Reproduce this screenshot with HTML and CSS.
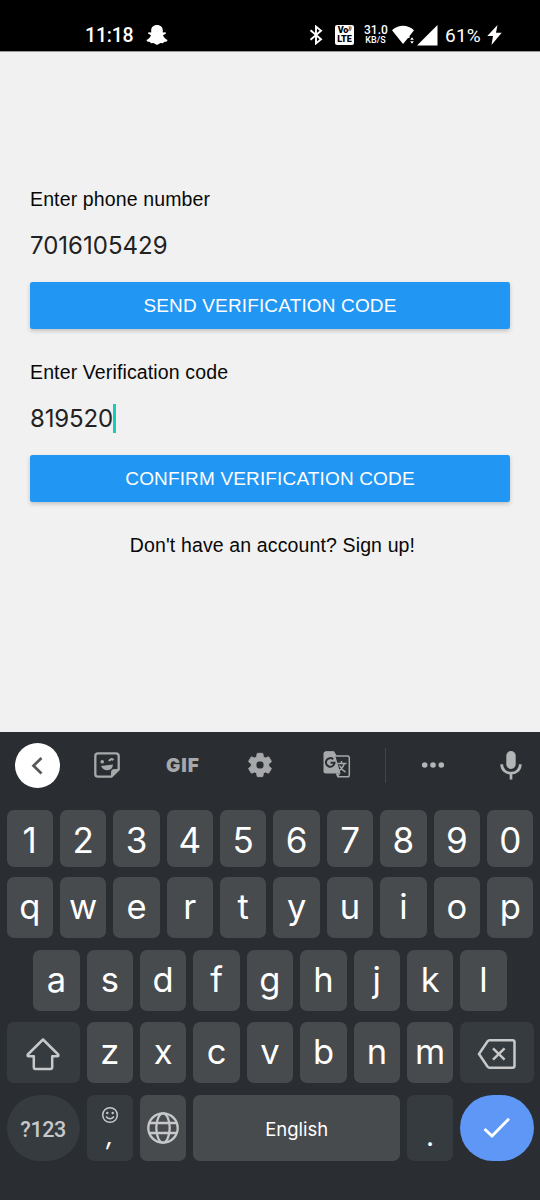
FILE: index.html
```html
<!DOCTYPE html>
<html lang="en">
<head>
<meta charset="utf-8">
<title>Phone verification</title>
<link rel="stylesheet" href="styles.css">
</head>
<body>
<header class="status">
  <span class="clock">11:18</span>
  <svg class="snap" width="22" height="20" viewBox="0 0 22 20"><path d="M11 0C7.400 0 5.200 2.300 5.200 5.500V7.500L2.500 7.300 2 8.500 5 10.300C4.300 12.500 2.600 14 .4 15.100L1.300 16.500 4 17.100 5 18.200 7.500 18 11 20 14.500 18 17 18.200 18 17.100 20.700 16.500 21.600 15.100C19.400 14 17.700 12.500 17 10.300L20 8.500 19.500 7.300 16.800 7.500V5.500C16.800 2.300 14.600 0 11 0Z" fill="#fff"/></svg>
  <span class="spacer"></span>
  <svg class="bt" width="14" height="20" viewBox="0 0 14 20"><path d="M1.500 5.300 12 14.200 7 18.400V1.600L12 5.800 1.500 14.700" fill="none" stroke="#fff" stroke-width="1.900"/></svg>
  <span class="volte"><span class="vo">Vo<i>))</i></span><span class="lte">LTE</span></span>
  <span class="speed"><b>31.0</b><small>KB/S</small></span>
  <svg class="wifi" width="23" height="20" viewBox="0 0 23 20"><path d="M0 5.200C6-.9 16-.9 22 5.200L17.500 11V13H16L11 19Z" fill="#fff"/><path d="M18.200 14.800 20 12.300 21.800 14.800ZM18.200 16.200 20 18.700 21.800 16.200Z" fill="#fff"/></svg>
  <svg class="signal" width="21" height="21" viewBox="0 0 21 21"><path d="M0 20.500 20.500 0V20.500Z" fill="#fff"/></svg>
  <span class="battery">61%</span>
  <svg class="bolt" width="15" height="20" viewBox="0 0 15 20"><path d="M10.500 0 .3 11H6L4.500 20 14.700 7.800H9Z" fill="#fff"/></svg>
</header>

<main class="form">
  <label class="label phone-label">Enter phone number</label>
  <div class="field phone">7016105429</div>
  <button class="btn send">SEND VERIFICATION CODE</button>
  <label class="label code-label">Enter Verification code</label>
  <div class="field code">819520<span class="caret"></span></div>
  <button class="btn confirm">CONFIRM VERIFICATION CODE</button>
  <a class="signup">Don't have an account? Sign up!</a>
</main>

<section class="keyboard">
  <div class="tools">
    <span class="back"><svg width="45" height="45" viewBox="0 0 45 45"><path d="M26.500 15 18.500 22.700 26.500 30.500" fill="none" stroke="#555759" stroke-width="2.700"/></svg></span>
    <svg class="t-sticker" width="26" height="26" viewBox="0 0 26 26"><path d="M4 1.300H22Q24.700 1.300 24.700 4V17.500L17.500 24.700H4Q1.300 24.700 1.300 22V4Q1.300 1.300 4 1.300Z" fill="none" stroke="#a6a8aa" stroke-width="2.300"/><path d="M17 25V20.500Q17 17 20.500 17H25Z" fill="#a6a8aa"/><path d="M7 14 19 12.500Q18.500 18 13.500 18.200 9 18.300 7 14Z" fill="#a6a8aa"/><circle cx="8.200" cy="9.800" r="1.800" fill="#a6a8aa"/><path d="M15 9Q17 6 19.500 8" stroke="#a6a8aa" stroke-width="2.200" fill="none"/></svg>
    <span class="gif">GIF</span>
    <svg class="t-gear" width="28" height="28" viewBox="0 0 24 24"><path fill="#a6a8aa" stroke="#a6a8aa" stroke-width=".8" stroke-linejoin="round" fill-rule="evenodd" d="M19.430 12.980c.04-.32.07-.64.07-.98s-.03-.66-.07-.98l2.110-1.650c.19-.15.24-.42.12-.64l-2-3.460c-.12-.22-.39-.3-.61-.22l-2.490 1c-.52-.4-1.080-.73-1.690-.98l-.38-2.650C14.460 2.180 14.250 2 14 2h-4c-.25 0-.46.18-.49.42l-.38 2.650c-.61.25-1.170.59-1.690.98l-2.490-1c-.23-.09-.49 0-.61.22l-2 3.460c-.13.22-.07.49.12.64l2.110 1.650c-.04.32-.07.65-.07.98s.03.66.07.98l-2.110 1.650c-.19.15-.24.42-.12.64l2 3.460c.12.22.39.3.61.22l2.490-1c.52.4 1.080.73 1.690.98l.38 2.650c.03.24.24.42.49.42h4c.25 0 .46-.18.49-.42l.38-2.650c.61-.25 1.170-.59 1.690-.98l2.490 1c.23.09.49 0 .61-.22l2-3.460c.12-.22.07-.49-.12-.64l-2.110-1.650ZM12 15.500A3.500 3.500 0 1 1 12 8.500a3.500 3.500 0 0 1 0 7Z"/></svg>
    <svg class="t-trans" width="28" height="28" viewBox="0 0 28 28"><path d="M2.500 1H10.500L13 5H24.500Q26.300 5 26.300 6.800V24Q26.300 25.800 24.500 25.800H15L13.500 22.500" fill="none" stroke="#a6a8aa" stroke-width="1.500"/><path d="M2.500.5H11L17.500 22.500H2.500Q.5 22.500.5 20.500V2.500Q.5.5 2.500.5Z" fill="#a6a8aa"/><path d="M13.500 22.500H17.500L14.500 26Z" fill="#a6a8aa"/><path d="M10.200 8.300A4.300 4.300 0 1 0 11.500 11.800H7.600" fill="none" stroke="#2a2e32" stroke-width="2"/><path d="M14.500 12.500H23.500M18.500 10V12.500M21.500 12.500Q20 17 15.500 20.500M16.500 14.500Q18.500 19 22.500 21" fill="none" stroke="#a6a8aa" stroke-width="1.500"/></svg>
    <span class="divider"></span>
    <svg class="t-dots" width="24" height="8" viewBox="0 0 24 8"><circle cx="3.700" cy="4" r="2.800" fill="#b3b5b6"/><circle cx="12" cy="4" r="2.800" fill="#b3b5b6"/><circle cx="20.300" cy="4" r="2.800" fill="#b3b5b6"/></svg>
    <svg class="t-mic" width="22" height="30" viewBox="0 0 22 30"><rect x="6.300" y="1" width="9.400" height="18" rx="4.700" fill="#b3b5b6"/><path d="M1.700 14.200C1.700 26.200 20.300 26.200 20.300 14.200M11 23V29.500" fill="none" stroke="#b3b5b6" stroke-width="2.700"/></svg>
  </div>

  <div class="row digits"><span class="key">1</span><span class="key">2</span><span class="key">3</span><span class="key">4</span><span class="key">5</span><span class="key">6</span><span class="key">7</span><span class="key">8</span><span class="key">9</span><span class="key">0</span></div>
  <div class="row letters"><span class="key">q</span><span class="key">w</span><span class="key">e</span><span class="key">r</span><span class="key">t</span><span class="key">y</span><span class="key">u</span><span class="key">i</span><span class="key">o</span><span class="key">p</span></div>
  <div class="row letters home"><span class="key">a</span><span class="key">s</span><span class="key">d</span><span class="key">f</span><span class="key">g</span><span class="key">h</span><span class="key">j</span><span class="key">k</span><span class="key">l</span></div>
  <div class="row letters lower">
    <span class="key wide dim"><svg width="36" height="34" viewBox="0 0 36 34"><path d="M18 2.500 33.200 17.500Q34 19.200 32.200 19.200H27.200V30.200Q27.200 32 25.400 32H10.600Q8.800 32 8.800 30.200V19.200H3.800Q2 19.200 2.800 17.500Z" fill="none" stroke="#c6c8c9" stroke-width="2.500" stroke-linejoin="round"/></svg></span>
    <span class="key">z</span><span class="key">x</span><span class="key">c</span><span class="key">v</span><span class="key">b</span><span class="key">n</span><span class="key">m</span>
    <span class="key wide dim"><svg width="40" height="32" viewBox="0 0 40 32"><path d="M12.500 2.200H35.500Q37.500 2.200 37.500 4.200V27.800Q37.500 29.800 35.500 29.800H12.500Q11.300 29.800 10.600 28.700L2 16 10.600 3.300Q11.300 2.200 12.500 2.200Z" fill="none" stroke="#c6c8c9" stroke-width="2.500"/><path d="M16 10.300 27.600 21.700M27.600 10.300 16 21.700" stroke="#c6c8c9" stroke-width="2.500"/></svg></span>
  </div>
  <div class="row bottom">
    <span class="key wide dim round symbols">?123</span>
    <span class="key dim comma"><svg width="18" height="18" viewBox="0 0 18 18"><circle cx="9" cy="9" r="7.300" fill="none" stroke="#c6c8c9" stroke-width="1.500"/><circle cx="6.300" cy="7" r="1.200" fill="#c6c8c9"/><circle cx="11.700" cy="7" r="1.200" fill="#c6c8c9"/><path d="M5 10.500Q9 15 13 10.500" fill="none" stroke="#c6c8c9" stroke-width="1.500"/></svg><span class="comma-mark">,</span></span>
    <span class="key globe"><svg width="34" height="34" viewBox="0 0 34 34" fill="none" stroke="#c6c8c9" stroke-width="2.300"><circle cx="17" cy="17" r="14.700"/><ellipse cx="17" cy="17" rx="6.700" ry="14.700"/><path d="M3.500 12H30.500M3.500 22H30.500"/></svg></span>
    <span class="key space">English</span>
    <span class="key dim period">.</span>
    <span class="key wide round enter"><svg width="28" height="22" viewBox="0 0 28 22"><path d="M1.500 12 9 19 26 1.800" fill="none" stroke="#fff" stroke-width="2.900"/></svg></span>
  </div>
</section>
</body>
</html>
```
FILE: styles.css
```css
* { box-sizing: border-box; }
body {
  margin: 0;
  width: 540px;
  height: 1200px;
  overflow: hidden;
  display: flex;
  flex-direction: column;
  background: #f1f1f1;
  font-family: Inter, "Liberation Sans", sans-serif;
}
svg { display: block; flex: none; }

.status {
  height: 51px;
  flex: none;
  display: flex;
  align-items: center;
  padding: 19px 38px 0 85px;
  background: #000;
  color: #fff;
  font-family: Roboto, sans-serif;
  box-shadow: 0 1px 0 #999;
}
.clock { width: 61px; font-size: 19.5px; font-weight: 500; letter-spacing: -.2px; }
.spacer { flex: 1; }
.bt { margin-right: 12px; }
.volte {
  width: 19px;
  height: 20px;
  margin-right: 10px;
  padding-top: 1px;
  border-radius: 2px;
  background: #fff;
  color: #000;
  font-size: 9px;
  font-weight: 900;
  line-height: 9px;
  text-align: center;
}
.vo, .lte { display: block; white-space: nowrap; }
.vo { letter-spacing: -.2px; }
.vo i { font-size: 5px; line-height: 5px; vertical-align: 3px; }
.speed { width: 23px; margin-right: 5px; text-align: center; }
.speed b { display: block; font-size: 12px; line-height: 11px; font-weight: 500; }
.speed small { display: block; font-size: 9px; line-height: 9px; font-weight: 500; }
.signal { margin-left: 2px; }
.battery { width: 42px; margin-left: 7px; font-size: 19px; letter-spacing: .2px; }

.form { height: 681px; flex: none; display: flex; flex-direction: column; padding: 135px 30px 0; }
.label, .signup { font-family: "Liberation Sans", Arial, sans-serif; font-size: 19.5px; line-height: 26px; letter-spacing: .13px; color: #080808; }
.label { height: 24px; }
.field { display: flex; align-items: center; height: 32px; color: #222; font-size: 24px; }
.phone { margin: 19px 0 21px; }
.code { margin: 19px 0 21px; letter-spacing: -.15px; }
.caret { width: 3px; height: 29px; background: #14ceb9; }
.btn {
  height: 47px;
  padding: 0;
  border: 0;
  border-radius: 2.5px;
  background: #2196f3;
  box-shadow: 0 2px 4px rgba(0, 0, 0, .2);
  color: #fff;
  font: 400 19px "Liberation Sans", Arial, sans-serif;
  letter-spacing: .15px;
}
.code-label { margin-top: 30px; }
.signup { margin: 30px 0 0 5px; text-align: center; }

.keyboard {
  height: 468px;
  flex: none;
  display: flex;
  flex-direction: column;
  padding: 0 6.500px;
  background: #2a2e32;
  color: #fff;
}
.tools { height: 66px; flex: none; display: flex; align-items: center; padding-left: 8.500px; }
.back { width: 45px; height: 45px; border-radius: 50%; background: #fff; }
.t-sticker { margin-left: 34px; }
.gif { width: 36px; margin: 0 44px 0 46px; font-size: 19px; font-weight: 900; color: #a6a8aa; letter-spacing: 1px; }
.t-trans { margin-left: 49px; }
.divider { width: 1px; height: 35px; margin: 0 35.500px 0 33.500px; background: #414549; }
.t-mic { margin-left: 54.500px; }

.row { display: flex; flex: none; gap: 7px; height: 61px; margin-bottom: 11.600px; }
.digits { height: 57px; margin: 12px 0 10.300px; }
.home { padding: 0 26.700px; }
.key {
  width: 46.400px;
  flex: none;
  display: flex;
  align-items: center;
  justify-content: center;
  border-radius: 7px;
  background: #484b4e;
  font-size: 35px;
}
.digits .key { padding-top: 3px; }
.letters .key { padding-bottom: 2px; font-size: 34.500px; }
.letters .wide { padding: 2px 0 0; }
.wide { width: 73.200px; }
.dim { background: #363b3f; }
.bottom { height: 66px; }
.round { border-radius: 33px; }
.key.symbols { font: 500 21.500px Roboto, sans-serif; letter-spacing: -.4px; color: #c6c8c9; padding-top: 3px; }
.comma { flex-direction: column; justify-content: flex-start; padding-top: 11px; }
.comma-mark { font-size: 26px; line-height: 24px; font-style: italic; }
.key.space { flex: 1; padding-top: 2px; font-size: 18.500px; }
.key.period { align-items: flex-end; padding-bottom: 8px; font-size: 28px; }
.enter { background: #5f97f6; }
```
